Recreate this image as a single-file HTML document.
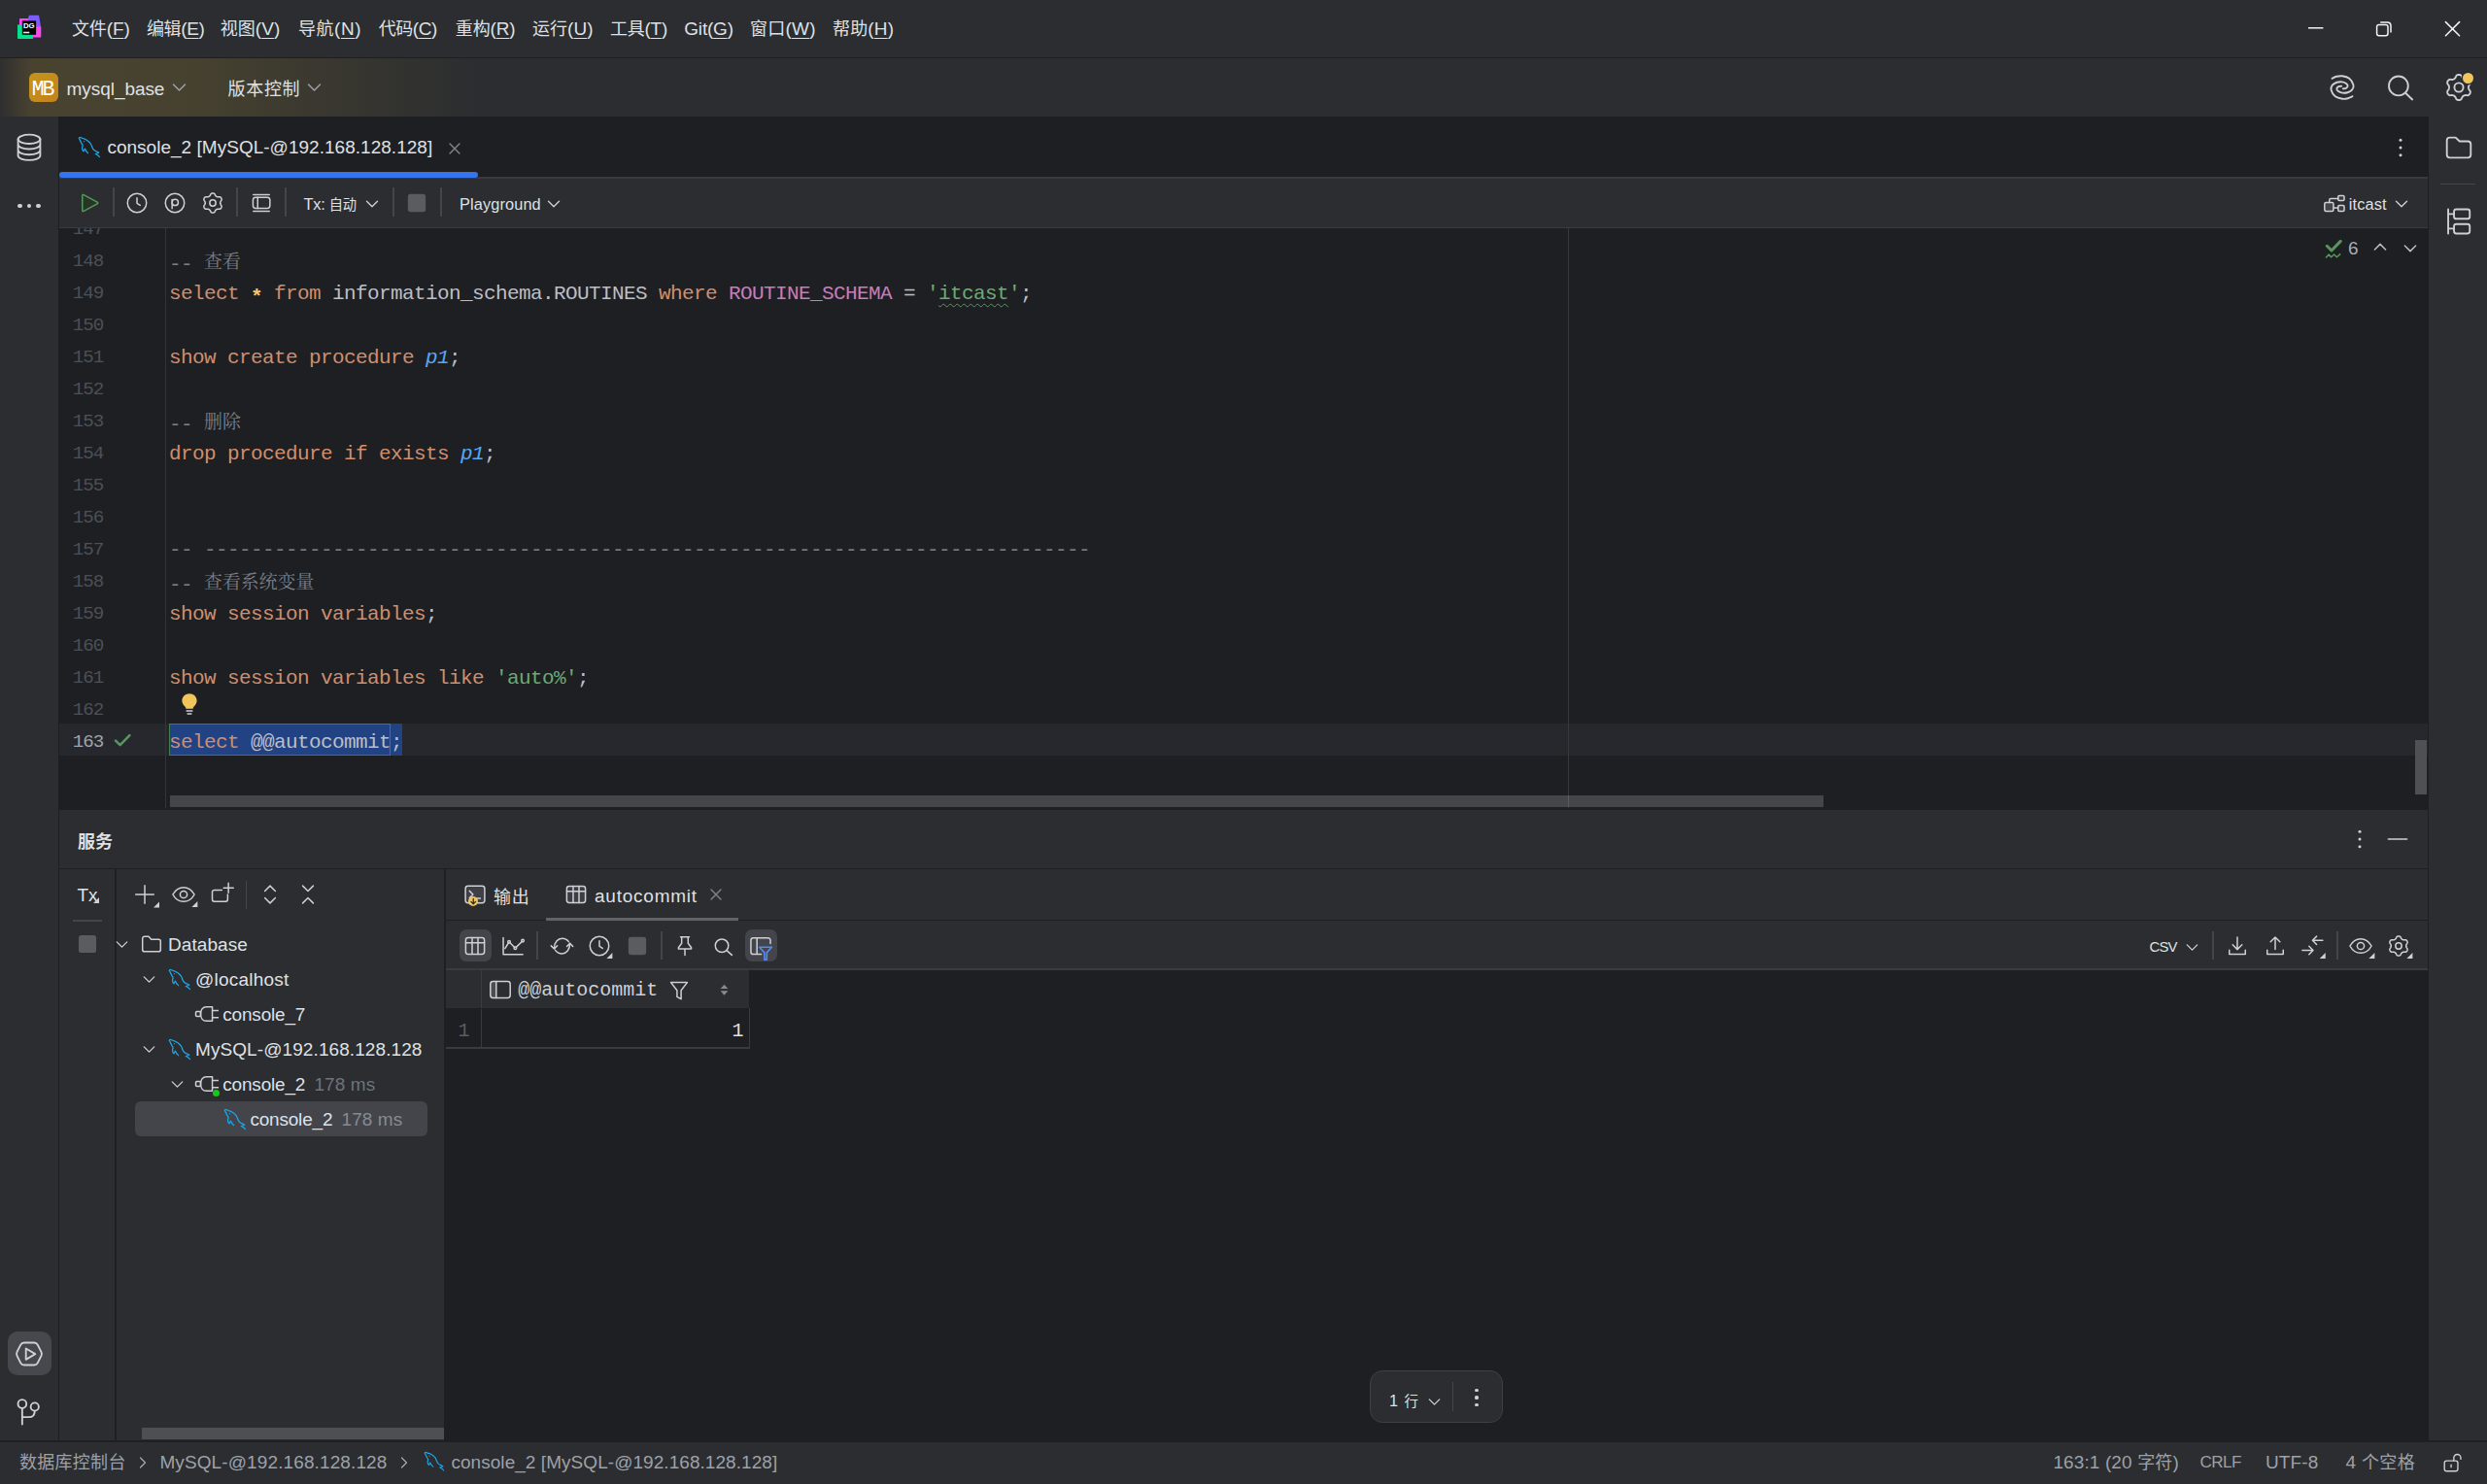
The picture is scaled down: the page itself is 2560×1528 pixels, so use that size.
<!DOCTYPE html>
<html lang="zh-CN"><head><meta charset="utf-8"><title>DataGrip - console_2</title>
<style>
html,body{margin:0;padding:0;background:#1E1F22;}
body{width:2560px;height:1528px;position:relative;overflow:hidden;font-family:"Liberation Sans","Noto Sans CJK SC",sans-serif;}
.b{position:absolute;}
.i{position:absolute;overflow:visible;}
.t{position:absolute;white-space:pre;font-family:"Liberation Sans","Noto Sans CJK SC",sans-serif;}
.t u{text-decoration-thickness:1.3px;text-underline-offset:2.5px;}
.m{font-family:"Liberation Mono","Noto Serif CJK SC",monospace;}
.code{position:absolute;overflow:hidden;font-family:"Liberation Mono","Noto Serif CJK SC",monospace;}
.ln{position:absolute;left:8.6px;width:36.6px;font-size:19.2px;line-height:33px;height:33px;text-align:right;white-space:pre;letter-spacing:-1px;margin-top:3.3px;}
.cl{position:absolute;left:113px;font-size:21px;letter-spacing:-0.603px;line-height:33px;height:33px;white-space:pre;margin-top:3px;}
.cj{font-family:"Noto Serif CJK SC",serif;font-size:18.9px;letter-spacing:0;position:relative;top:-2.2px;}
</style></head>
<body>
<div class="b" style="left:0px;top:0px;width:2560px;height:59px;background:#2B2D30;"></div>
<div class="b" style="left:0px;top:59px;width:2560px;height:1px;background:#1E1F22;"></div>
<div class="b" style="left:0px;top:60px;width:2560px;height:60px;background:#2B2D30;background:linear-gradient(90deg,#2F2F2F 0px,#48422F 32px,#47422F 190px,#3A382F 330px,#2B2D30 490px);"></div>
<svg class="i" style="left:17px;top:15px;" width="26" height="26" viewBox="0 0 26 26"><defs><linearGradient id="lg1" x1="0" y1="0" x2="0" y2="1"><stop offset="0" stop-color="#7A5CFF"/><stop offset="0.8" stop-color="#7F5BFF"/><stop offset="1" stop-color="#FF45ED"/></linearGradient></defs><g stroke-linejoin="round" stroke-width="1.6"><path d="M3.8 4.8H12L14 7H7V12.5L3.8 11.5Z" fill="#FF45ED" stroke="#FF45ED"/><path d="M13.4 1.6H22.4L24.4 13.6H19V7H14L12.6 4.6Z" fill="url(#lg1)" stroke="url(#lg1)"/><path d="M19 13.6H24.5V22.8H16.5L15 20H19Z" fill="#FF45ED" stroke="#FF45ED"/><path d="M1.8 11L6.5 12.5V20H15.4L16.4 24.2H1.8Z" fill="#08DE8C" stroke="#08DE8C"/></g><rect x="5.8" y="6.4" width="14.3" height="14.4" fill="#000"/><text x="6.9" y="13.9" font-family="Liberation Sans,sans-serif" font-weight="700" font-size="7.6" fill="#fff" textLength="11.8" lengthAdjust="spacingAndGlyphs">DG</text><rect x="7.1" y="17.7" width="6.2" height="1.6" fill="#e8e8e8"/></svg>
<span id="t1" class="t" style="left:74.00px;top:16.5px;font-size:18.99px;color:#DFE1E5;line-height:26px;letter-spacing:-0.125px;"><span style="font-size:18px">文件</span>(<u>F</u>)</span>
<span id="t2" class="t" style="left:151.00px;top:16.5px;font-size:18.99px;color:#DFE1E5;line-height:26px;letter-spacing:-0.375px;"><span style="font-size:18px">编辑</span>(<u>E</u>)</span>
<span id="t3" class="t" style="left:226.70px;top:16.5px;font-size:18.99px;color:#DFE1E5;line-height:26px;letter-spacing:0.050px;"><span style="font-size:18px">视图</span>(<u>V</u>)</span>
<span id="t4" class="t" style="left:307.00px;top:16.5px;font-size:18.99px;color:#DFE1E5;line-height:26px;letter-spacing:0.550px;"><span style="font-size:18px">导航</span>(<u>N</u>)</span>
<span id="t5" class="t" style="left:389.80px;top:16.5px;font-size:18.99px;color:#DFE1E5;line-height:26px;letter-spacing:-0.475px;"><span style="font-size:18px">代码</span>(<u>C</u>)</span>
<span id="t6" class="t" style="left:468.80px;top:16.5px;font-size:18.99px;color:#DFE1E5;line-height:26px;letter-spacing:-0.125px;"><span style="font-size:18px">重构</span>(<u>R</u>)</span>
<span id="t7" class="t" style="left:548.00px;top:16.5px;font-size:18.99px;color:#DFE1E5;line-height:26px;letter-spacing:0.025px;"><span style="font-size:18px">运行</span>(<u>U</u>)</span>
<span id="t8" class="t" style="left:628.00px;top:16.5px;font-size:18.99px;color:#DFE1E5;line-height:26px;letter-spacing:-0.250px;"><span style="font-size:18px">工具</span>(<u>T</u>)</span>
<span id="t9" class="t" style="left:704.30px;top:16.5px;font-size:18.99px;color:#DFE1E5;line-height:26px;letter-spacing:-0.200px;">Git(<u>G</u>)</span>
<span id="t10" class="t" style="left:772.00px;top:16.5px;font-size:18.99px;color:#DFE1E5;line-height:26px;letter-spacing:0.225px;"><span style="font-size:18px">窗口</span>(<u>W</u>)</span>
<span id="t11" class="t" style="left:857.00px;top:16.5px;font-size:18.99px;color:#DFE1E5;line-height:26px;letter-spacing:0.150px;"><span style="font-size:18px">帮助</span>(<u>H</u>)</span>
<svg class="i" style="left:2376px;top:21px;" width="16" height="16" viewBox="0 0 16 16"><path stroke="#F2F3F5" stroke-width="1.5" d="M0 7.8H15.4"/></svg>
<svg class="i" style="left:2445px;top:21px;" width="18" height="18" viewBox="0 0 18 18"><g fill="none" stroke="#F2F3F5" stroke-width="1.5"><rect x="1.6" y="4.4" width="11.4" height="11.4" rx="2.2"/><path d="M5.2 1.9H12.2C14.4 1.9 16 3.4 16 5.6V12.4"/></g></svg>
<svg class="i" style="left:2516px;top:21px;" width="18" height="18" viewBox="0 0 18 18"><path stroke="#F2F3F5" stroke-width="1.5" stroke-linecap="round" d="M1.4 1.6L15.6 15.8M15.6 1.6L1.4 15.8"/></svg>
<div class="b" style="left:30px;top:75px;width:30px;height:30px;background:#C28A1C;border-radius:6px;background:linear-gradient(135deg,#C4951D,#C4821B);"></div>
<span id="t12" class="t m" style="left:32.80px;top:79.0px;font-size:21.50px;color:#fff;line-height:26px;font-family:'Liberation Mono',monospace;letter-spacing:-2.2px;">MB</span>
<span id="t13" class="t" style="left:68.60px;top:78.5px;font-size:18.99px;color:#DFE1E5;line-height:26px;letter-spacing:-0.056px;">mysql_base</span>
<svg class="i" style="left:177px;top:85px;" width="15" height="10" viewBox="0 0 15 10"><path fill="none" stroke="#9DA0A8" stroke-width="1.5" stroke-linecap="round" stroke-linejoin="round" d="M1.5 2L7.5 8L13.5 2"/></svg>
<span id="t14" class="t" style="left:234.60px;top:78.7px;font-size:18.99px;color:#DFE1E5;line-height:26px;letter-spacing:0.667px;"><span style="font-size:18px">版本控制</span></span>
<svg class="i" style="left:316px;top:85px;" width="15" height="10" viewBox="0 0 15 10"><path fill="none" stroke="#9DA0A8" stroke-width="1.5" stroke-linecap="round" stroke-linejoin="round" d="M1.5 2L7.5 8L13.5 2"/></svg>
<svg class="i" style="left:2396px;top:75px;" width="30" height="30" viewBox="0 0 20 20"><path fill="none" stroke="#CED0D6" stroke-width="1.25" stroke-linecap="round" stroke-linejoin="round" d="M3.00 3.85C3.52 3.62 4.93 2.77 6.10 2.50C7.27 2.23 8.55 1.98 10.00 2.20C11.45 2.43 13.53 2.83 14.80 3.85C16.07 4.87 17.32 7.02 17.65 8.30C17.98 9.58 17.47 10.68 16.80 11.55C16.13 12.42 14.78 13.13 13.65 13.50C12.52 13.87 11.09 13.91 10.00 13.75C8.91 13.59 7.72 13.03 7.10 12.55C6.47 12.07 6.19 11.38 6.25 10.85C6.31 10.32 6.91 9.69 7.45 9.40C7.99 9.11 9.16 9.15 9.50 9.10M17.00 16.15C16.48 16.38 15.07 17.23 13.90 17.50C12.73 17.77 11.45 18.03 10.00 17.80C8.55 17.57 6.48 17.17 5.20 16.15C3.92 15.13 2.68 12.98 2.35 11.70C2.02 10.42 2.53 9.32 3.20 8.45C3.87 7.58 5.22 6.87 6.35 6.50C7.48 6.13 8.91 6.09 10.00 6.25C11.09 6.41 12.28 6.97 12.90 7.45C13.53 7.93 13.81 8.62 13.75 9.15C13.69 9.68 13.09 10.31 12.55 10.60C12.01 10.89 10.84 10.85 10.50 10.90"/></svg>
<svg class="i" style="left:2456px;top:75px;" width="30" height="30" viewBox="0 0 20 20"><g fill="none" stroke="#CED0D6" stroke-width="1.25" stroke-linecap="round" stroke-linejoin="round"><circle cx="8.6" cy="8.95" r="6.6"/><path d="M13.4 13.8L18.1 18.3"/></g></svg>
<svg class="i" style="left:2515.5px;top:75px;" width="30" height="30" viewBox="0 0 20 20"><g fill="none" stroke="#CED0D6" stroke-width="1.25" stroke-linecap="round" stroke-linejoin="round"><path d="M10.00 1.25L10.57 1.32L11.12 1.52L11.62 1.87L11.99 2.56L12.29 3.27L12.62 3.67L12.96 3.99L13.32 4.24L13.72 4.43L14.17 4.57L14.69 4.65L15.44 4.56L16.23 4.53L16.79 4.79L17.23 5.17L17.58 5.62L17.80 6.15L17.90 6.73L17.85 7.34L17.44 8.01L16.97 8.61L16.79 9.11L16.68 9.56L16.65 10.00L16.68 10.44L16.79 10.89L16.97 11.39L17.44 11.99L17.85 12.66L17.90 13.27L17.80 13.85L17.58 14.37L17.23 14.83L16.79 15.21L16.23 15.47L15.44 15.44L14.69 15.35L14.17 15.43L13.72 15.57L13.32 15.76L12.96 16.01L12.62 16.33L12.29 16.73L11.99 17.44L11.62 18.13L11.12 18.48L10.57 18.68L10.00 18.75L9.43 18.68L8.88 18.48L8.38 18.13L8.01 17.44L7.71 16.73L7.38 16.33L7.04 16.01L6.68 15.76L6.28 15.57L5.83 15.43L5.31 15.35L4.56 15.44L3.77 15.47L3.21 15.21L2.77 14.83L2.42 14.38L2.20 13.85L2.10 13.27L2.15 12.66L2.56 11.99L3.03 11.39L3.21 10.89L3.32 10.44L3.35 10.00L3.32 9.56L3.21 9.11L3.03 8.61L2.56 8.01L2.15 7.34L2.10 6.73L2.20 6.15L2.42 5.62L2.77 5.17L3.21 4.79L3.77 4.53L4.56 4.56L5.31 4.65L5.83 4.57L6.28 4.43L6.67 4.24L7.04 3.99L7.38 3.67L7.71 3.27L8.01 2.56L8.38 1.87L8.88 1.52L9.43 1.32Z"/><circle cx="10" cy="10" r="3.05"/></g></svg>
<div class="b" style="left:2534.5px;top:74.5px;width:11px;height:11px;background:#F2C55C;border-radius:50%;box-shadow:0 0 0 1.5px #2B2D30;"></div>
<div class="b" style="left:0px;top:120px;width:60px;height:1365px;background:#2B2D30;"></div>
<div class="b" style="left:60px;top:120px;width:1px;height:1365px;background:#1E1F22;"></div>
<svg class="i" style="left:15px;top:137px;" width="30" height="30" viewBox="0 0 20 20"><g fill="none" stroke="#CED0D6" stroke-width="1.25" stroke-linecap="round" stroke-linejoin="round"><ellipse cx="10" cy="4.2" rx="7.6" ry="3.1"/><path d="M2.4 4.2V15.5C2.4 17.2 5.8 18.6 10 18.6C14.2 18.6 17.6 17.2 17.6 15.5V4.2M2.4 7.9C2.4 9.6 5.8 11 10 11C14.2 11 17.6 9.6 17.6 7.9M2.4 11.7C2.4 13.4 5.8 14.8 10 14.8C14.2 14.8 17.6 13.4 17.6 11.7"/></g></svg>
<div class="b" style="left:18.3px;top:209.7px;width:4.6px;height:4.6px;background:#CED0D6;border-radius:50%;"></div>
<div class="b" style="left:27.7px;top:209.7px;width:4.6px;height:4.6px;background:#CED0D6;border-radius:50%;"></div>
<div class="b" style="left:37.1px;top:209.7px;width:4.6px;height:4.6px;background:#CED0D6;border-radius:50%;"></div>
<div class="b" style="left:7.5px;top:1371px;width:45px;height:45px;background:#46484D;border-radius:10px;"></div>
<svg class="i" style="left:15px;top:1378.5px;" width="30" height="30" viewBox="0 0 20 20"><g fill="none" stroke="#CED0D6" stroke-width="1.25" stroke-linecap="round" stroke-linejoin="round"><path d="M1.72 11.43Q1.00 10.00 1.72 8.57L4.18 3.73Q4.90 2.30 6.50 2.30L13.50 2.30Q15.10 2.30 15.82 3.73L18.28 8.57Q19.00 10.00 18.28 11.43L15.82 16.27Q15.10 17.70 13.50 17.70L6.50 17.70Q4.90 17.70 4.18 16.27Z"/><path d="M7.8 6.3V13.9L14.2 10.1Z"/></g></svg>
<svg class="i" style="left:14px;top:1437.8px;" width="30" height="30" viewBox="0 0 20 20"><g fill="none" stroke="#CED0D6" stroke-width="1.25" stroke-linecap="round" stroke-linejoin="round"><circle cx="5.9" cy="5" r="2.9"/><circle cx="14.5" cy="7" r="2.75"/><path d="M5.9 7.9V19M14.5 9.8C14.5 12.6 13 14.1 10.5 14.1H5.9"/></g></svg>
<div class="b" style="left:2500px;top:120px;width:60px;height:1365px;background:#2B2D30;"></div>
<div class="b" style="left:2499px;top:120px;width:1px;height:1365px;background:#1E1F22;"></div>
<svg class="i" style="left:2515.9px;top:137px;" width="30" height="30" viewBox="0 0 20 20"><path fill="none" stroke="#CED0D6" stroke-width="1.25" stroke-linecap="round" stroke-linejoin="round" d="M1.8 5.1C1.8 4 2.7 3.1 3.8 3.1H7.8L10.5 5.7H16.2C17.3 5.7 18.2 6.6 18.2 7.7V14.9C18.2 16 17.3 16.9 16.2 16.9H3.8C2.7 16.9 1.8 16 1.8 14.9Z"/></svg>
<div class="b" style="left:2512px;top:189px;width:36px;height:1px;background:#43454A;"></div>
<svg class="i" style="left:2516px;top:212.75px;" width="30" height="30" viewBox="0 0 20 20"><g fill="none" stroke="#CED0D6" stroke-width="1.25" stroke-linecap="round" stroke-linejoin="round"><path d="M2.7 1.7V18.3M2.7 4.9H6.7M2.7 14.9H6.7"/><rect x="6.7" y="1.7" width="10.8" height="6.5" rx="1.6"/><rect x="6.7" y="11.8" width="10.8" height="6.5" rx="1.6"/></g></svg>
<div class="b" style="left:61px;top:120px;width:2438px;height:62px;background:#1E1F22;"></div>
<div class="b" style="left:61px;top:182px;width:2438px;height:2px;background:#393B40;"></div>
<div class="b" style="left:61px;top:177px;width:431px;height:5.5px;background:#3574F0;border-radius:3px;"></div>
<svg class="i" style="left:80.0px;top:140.0px;" width="24" height="24" viewBox="0 0 16 16"><path fill="none" stroke="#1FA5E8" stroke-width="0.85" stroke-linecap="round" stroke-linejoin="round" d="M0.85 1.45C1.01 1.37 1.44 0.94 1.80 0.95C2.17 0.96 2.50 1.31 3.04 1.52C3.58 1.73 4.39 1.91 5.06 2.23C5.73 2.55 6.47 2.97 7.08 3.44C7.69 3.91 8.26 4.45 8.70 5.06C9.14 5.67 9.41 6.44 9.71 7.08C10.01 7.72 10.14 8.39 10.51 8.90C10.88 9.41 11.42 9.77 11.93 10.11C12.44 10.45 13.12 10.69 13.55 10.92C13.98 11.15 14.34 11.40 14.50 11.50L12.2 12.35L13.75 13.2L15 14.4M0.85 1.45C1.01 1.78 1.52 2.84 1.82 3.44C2.12 4.04 2.36 4.55 2.63 5.06C2.90 5.56 3.37 6.00 3.44 6.47C3.51 6.94 3.07 7.38 3.04 7.89C3.01 8.39 3.07 9.06 3.24 9.50C3.41 9.94 3.92 10.33 4.05 10.50L4.96 8.7L5.87 10.5L7.08 11.73"/><circle cx="4.35" cy="3.75" r="0.42" fill="#1FA5E8"/></svg>
<span id="t15" class="t" style="left:110.40px;top:138.5px;font-size:18.99px;color:#DFE1E5;line-height:26px;letter-spacing:0.030px;">console_2 [MySQL-@192.168.128.128]</span>
<svg class="i" style="left:456.0px;top:140.5px;" width="24" height="24" viewBox="0 0 16 16"><path fill="none" stroke="#7D8188" stroke-width="1" stroke-linecap="round" d="M4.7 4.7L11.3 11.3M11.3 4.7L4.7 11.3"/></svg>
<svg class="i" style="left:2459.0px;top:140.0px;" width="24" height="24" viewBox="0 0 16 16"><g fill="#CED0D6"><circle cx="8" cy="2.9" r="1"/><circle cx="8" cy="8" r="1"/><circle cx="8" cy="13.1" r="1"/></g></svg>
<div class="b" style="left:61px;top:184px;width:2438px;height:50px;background:#2B2D30;"></div>
<div class="b" style="left:61px;top:234px;width:2438px;height:1px;background:#393B40;"></div>
<svg class="i" style="left:81.0px;top:197.0px;" width="24" height="24" viewBox="0 0 16 16"><path fill="#253627" stroke="#57965C" stroke-width="1" stroke-linejoin="round" d="M2.50 3.00Q2.50 1.90 3.47 2.43L12.73 7.47Q13.70 8.00 12.73 8.53L3.47 13.57Q2.50 14.10 2.50 13.00Z"/></svg>
<div class="b" style="left:116.25px;top:192.5px;width:1.5px;height:30px;background:#43454A;"></div>
<div class="b" style="left:243.25px;top:192.5px;width:1.5px;height:30px;background:#43454A;"></div>
<div class="b" style="left:293.25px;top:192.5px;width:1.5px;height:30px;background:#43454A;"></div>
<div class="b" style="left:404.25px;top:192.5px;width:1.5px;height:30px;background:#43454A;"></div>
<div class="b" style="left:453.25px;top:192.5px;width:1.5px;height:30px;background:#43454A;"></div>
<svg class="i" style="left:129.0px;top:197.0px;" width="24" height="24" viewBox="0 0 16 16"><g fill="none" stroke="#CED0D6" stroke-width="1" stroke-linecap="round" stroke-linejoin="round"><circle cx="8" cy="8" r="6.5"/><path d="M8 4.5V8.2L10.2 9.6"/></g></svg>
<svg class="i" style="left:168.0px;top:197.0px;" width="24" height="24" viewBox="0 0 16 16"><g fill="none" stroke="#CED0D6" stroke-width="1" stroke-linecap="round" stroke-linejoin="round"><circle cx="8" cy="8" r="6.5"/><circle cx="8.2" cy="7.6" r="2.1"/><path d="M6.1 5.6V11.8"/></g></svg>
<svg class="i" style="left:207.0px;top:197.0px;" width="24" height="24" viewBox="0 0 16 16"><g fill="none" stroke="#CED0D6" stroke-width="1" stroke-linecap="round" stroke-linejoin="round"><path d="M8.00 1.25L8.44 1.30L8.86 1.46L9.25 1.72L9.54 2.25L9.77 2.79L10.03 3.10L10.29 3.35L10.57 3.54L10.88 3.69L11.23 3.80L11.63 3.86L12.21 3.79L12.81 3.78L13.24 3.98L13.58 4.27L13.85 4.62L14.02 5.03L14.10 5.47L14.06 5.94L13.75 6.46L13.39 6.93L13.25 7.31L13.18 7.66L13.15 8.00L13.18 8.34L13.25 8.69L13.39 9.07L13.75 9.54L14.06 10.06L14.10 10.53L14.02 10.97L13.85 11.37L13.58 11.73L13.24 12.02L12.81 12.22L12.21 12.21L11.63 12.14L11.23 12.20L10.88 12.31L10.57 12.46L10.29 12.65L10.03 12.90L9.77 13.21L9.54 13.75L9.25 14.28L8.86 14.54L8.44 14.70L8.00 14.75L7.56 14.70L7.14 14.54L6.75 14.28L6.46 13.75L6.23 13.21L5.97 12.90L5.71 12.65L5.43 12.46L5.12 12.31L4.77 12.20L4.37 12.14L3.79 12.21L3.19 12.22L2.76 12.02L2.42 11.73L2.15 11.38L1.98 10.97L1.90 10.53L1.94 10.06L2.25 9.54L2.61 9.07L2.75 8.69L2.82 8.34L2.85 8.00L2.82 7.66L2.75 7.31L2.61 6.93L2.25 6.46L1.94 5.94L1.90 5.47L1.98 5.03L2.15 4.62L2.42 4.27L2.76 3.98L3.19 3.78L3.79 3.79L4.37 3.86L4.77 3.80L5.12 3.69L5.42 3.54L5.71 3.35L5.97 3.10L6.23 2.79L6.46 2.25L6.75 1.72L7.14 1.46L7.56 1.30Z"/><circle cx="8" cy="8" r="2.1"/></g></svg>
<svg class="i" style="left:257.0px;top:197.2px;" width="24" height="24" viewBox="0 0 16 16"><g fill="none" stroke="#CED0D6" stroke-width="1" stroke-linecap="round" stroke-linejoin="round"><path d="M2.5 2.3H13.5M2.5 13.7H13.5M5.5 4.1V11.6"/><rect x="2.3" y="4.1" width="11.6" height="7.5" rx="1.8"/></g></svg>
<span id="t16" class="t" style="left:312.60px;top:196.5px;font-size:16.45px;color:#DFE1E5;line-height:26px;letter-spacing:-0.300px;">Tx: <span style="font-size:14.3px">自动</span></span>
<svg class="i" style="left:372.0px;top:199.0px;" width="22" height="22" viewBox="0 0 16 16"><path fill="none" stroke="#CED0D6" stroke-width="1" stroke-linecap="round" stroke-linejoin="round" d="M4 6L8 10L12 6"/></svg>
<svg class="i" style="left:417.0px;top:197.0px;" width="24" height="24" viewBox="0 0 16 16"><rect x="1.9" y="1.9" width="12.2" height="12.2" rx="1.8" fill="#5B5C60"/></svg>
<span id="t17" class="t" style="left:473.00px;top:196.5px;font-size:16.35px;color:#DFE1E5;line-height:26px;letter-spacing:0.111px;">Playground</span>
<svg class="i" style="left:559.4px;top:199.0px;" width="22" height="22" viewBox="0 0 16 16"><path fill="none" stroke="#CED0D6" stroke-width="1" stroke-linecap="round" stroke-linejoin="round" d="M4 6L8 10L12 6"/></svg>
<svg class="i" style="left:2391.0px;top:197.0px;" width="24" height="24" viewBox="0 0 16 16"><g fill="none" stroke="#CED0D6" stroke-width="1" stroke-linecap="round" stroke-linejoin="round"><rect x="1.2" y="7.6" width="6.1" height="6" rx="1" fill="#43454A"/><rect x="10.5" y="2.95" width="4.2" height="3.4" rx="0.8" fill="#3A3C40"/><rect x="10.5" y="9.7" width="4.2" height="3.9" rx="0.8" fill="#3A3C40"/><path d="M4.5 7.6V6C4.5 5.4 4.9 5 5.5 5H10.5M7.3 11.3H10.5"/></g></svg>
<span id="t18" class="t" style="left:2417.80px;top:196.5px;font-size:16.35px;color:#DFE1E5;line-height:26px;letter-spacing:0.120px;">itcast</span>
<svg class="i" style="left:2461.0px;top:199.0px;" width="22" height="22" viewBox="0 0 16 16"><path fill="none" stroke="#CED0D6" stroke-width="1" stroke-linecap="round" stroke-linejoin="round" d="M4 6L8 10L12 6"/></svg>
<div class="b" style="left:61px;top:235px;width:2438px;height:597px;background:#1E1F22;"></div>
<div class="b" style="left:61px;top:745px;width:2438px;height:33px;background:#26282E;"></div>
<div class="b" style="left:170px;top:235px;width:1px;height:597px;background:#313438;"></div>
<div class="b" style="left:1613.6px;top:235px;width:1.8px;height:597px;background:#36383C;"></div>
<div class="b" style="left:174.2px;top:745px;width:239.8px;height:33px;background:#214283;"></div>
<div class="b" style="left:174px;top:745px;width:228.2px;height:33px;background:transparent;border:1.5px solid #3F7E4E;box-sizing:border-box;"></div>
<div class="code" style="left:61px;top:235px;width:2438px;height:597px;">
<span class="ln" style="top:-18px;color:#4B5059">147</span>
<span class="ln" style="top:15px;color:#4B5059">148</span>
<span class="cl" style="top:15px"><span style="color:#7A7E85;">-- <span class="cj">查看</span></span></span>
<span class="ln" style="top:48px;color:#4B5059">149</span>
<span class="cl" style="top:48px"><span style="color:#CF8E6D;">select </span><span style="color:#FFC66D;position:relative;top:3.5px;font-weight:700;">*</span><span style="color:#CF8E6D;"> from </span><span style="color:#BCBEC4;">information_schema.ROUTINES </span><span style="color:#CF8E6D;">where </span><span style="color:#C77DBB;">ROUTINE_SCHEMA</span><span style="color:#BCBEC4;"> = </span><span style="color:#6AAB73;">'</span><span style="color:#6AAB73;text-decoration:underline wavy #57965C 1px;text-underline-offset:4px;">itcast</span><span style="color:#6AAB73;">'</span><span style="color:#BCBEC4;">;</span></span>
<span class="ln" style="top:81px;color:#4B5059">150</span>
<span class="ln" style="top:114px;color:#4B5059">151</span>
<span class="cl" style="top:114px"><span style="color:#CF8E6D;">show create procedure </span><span style="color:#56A8F5;font-style:italic;">p1</span><span style="color:#BCBEC4;">;</span></span>
<span class="ln" style="top:147px;color:#4B5059">152</span>
<span class="ln" style="top:180px;color:#4B5059">153</span>
<span class="cl" style="top:180px"><span style="color:#7A7E85;">-- <span class="cj">删除</span></span></span>
<span class="ln" style="top:213px;color:#4B5059">154</span>
<span class="cl" style="top:213px"><span style="color:#CF8E6D;">drop procedure if exists </span><span style="color:#56A8F5;font-style:italic;">p1</span><span style="color:#BCBEC4;">;</span></span>
<span class="ln" style="top:246px;color:#4B5059">155</span>
<span class="ln" style="top:279px;color:#4B5059">156</span>
<span class="ln" style="top:312px;color:#4B5059">157</span>
<span class="cl" style="top:312px"><span style="color:#7A7E85;">-- ----------------------------------------------------------------------------</span></span>
<span class="ln" style="top:345px;color:#4B5059">158</span>
<span class="cl" style="top:345px"><span style="color:#7A7E85;">-- <span class="cj">查看系统变量</span></span></span>
<span class="ln" style="top:378px;color:#4B5059">159</span>
<span class="cl" style="top:378px"><span style="color:#CF8E6D;">show session variables</span><span style="color:#BCBEC4;">;</span></span>
<span class="ln" style="top:411px;color:#4B5059">160</span>
<span class="ln" style="top:444px;color:#4B5059">161</span>
<span class="cl" style="top:444px"><span style="color:#CF8E6D;">show session variables like </span><span style="color:#6AAB73;">'auto%'</span><span style="color:#BCBEC4;">;</span></span>
<span class="ln" style="top:477px;color:#4B5059">162</span>
<span class="ln" style="top:510px;color:#A1A3AB">163</span>
<span class="cl" style="top:510px"><span style="color:#CF8E6D;">select </span><span style="color:#BCBEC4;">@@autocommit;</span></span>
</div>
<svg class="i" style="left:116.5px;top:755px;" width="18.5" height="14.5" viewBox="0 0 18.5 14.5"><path fill="none" stroke="#57965C" stroke-width="2.5" stroke-linecap="round" stroke-linejoin="round" d="M2 7.6L6.6 12.2L16.4 2.2"/></svg>
<svg class="i" style="left:185px;top:713px;" width="20" height="24" viewBox="0 0 20 24"><path fill="#F2C55C" d="M10 1.2C5.6 1.2 2.4 4.4 2.4 8.4C2.4 11 3.8 12.8 5.2 14.2C6 15 6.4 15.8 6.4 16.8H13.6C13.6 15.8 14 15 14.8 14.2C16.2 12.8 17.6 11 17.6 8.4C17.6 4.4 14.4 1.2 10 1.2Z"/><path stroke="#CED0D6" stroke-width="1.6" d="M6.6 19H13.4M7.6 22H12.4"/></svg>
<svg class="i" style="left:2392px;top:245px;" width="21" height="22" viewBox="0 0 21 22"><path fill="none" stroke="#57965C" stroke-width="3" stroke-linecap="round" stroke-linejoin="round" d="M3.3 8.3L8 13L17.2 3.4"/><path fill="none" stroke="#57965C" stroke-width="1.5" stroke-linejoin="round" d="M2 20.4L5.2 17L7.6 19.8L10.6 17L13.4 19.8L17.2 16.4"/></svg>
<span id="t19" class="t" style="left:2417.00px;top:243.0px;font-size:18.99px;color:#A8ADB5;line-height:26px;">6</span>
<svg class="i" style="left:2443px;top:249px;" width="14" height="10" viewBox="0 0 14 10"><path fill="none" stroke="#B9BCC3" stroke-width="1.5" stroke-linecap="round" stroke-linejoin="round" d="M1.4 8L7 2.4L12.6 8"/></svg>
<svg class="i" style="left:2474px;top:251px;" width="14" height="10" viewBox="0 0 14 10"><path fill="none" stroke="#B9BCC3" stroke-width="1.5" stroke-linecap="round" stroke-linejoin="round" d="M1.4 2L7 7.6L12.6 2"/></svg>
<div class="b" style="left:2486px;top:762px;width:12px;height:56px;background:#4E5054;"></div>
<div class="b" style="left:175px;top:819px;width:1702px;height:12px;background:#454648;"></div>
<div class="b" style="left:1613.6px;top:819px;width:1.8px;height:12px;background:#5A5B5E;"></div>
<div class="b" style="left:61px;top:834px;width:2438px;height:651px;background:#2B2D30;"></div>
<span id="t20" class="t" style="left:80.00px;top:854.2px;font-size:18.99px;color:#DFE1E5;line-height:26px;font-weight:700;"><span style="font-size:18px">服务</span></span>
<svg class="i" style="left:2416.8px;top:852.0px;" width="24" height="24" viewBox="0 0 16 16"><g fill="#CED0D6"><circle cx="8" cy="2.9" r="1"/><circle cx="8" cy="8" r="1"/><circle cx="8" cy="13.1" r="1"/></g></svg>
<svg class="i" style="left:2456.2px;top:852.0px;" width="24" height="24" viewBox="0 0 16 16"><path fill="none" stroke="#CED0D6" stroke-width="1" stroke-linecap="round" stroke-linejoin="round" d="M1.6 8H14.4"/></svg>
<div class="b" style="left:61px;top:894px;width:2438px;height:1px;background:#1E1F22;"></div>
<div class="b" style="left:118px;top:895px;width:2px;height:590px;background:#1E1F22;"></div>
<div class="b" style="left:457px;top:895px;width:2px;height:590px;background:#1E1F22;"></div>
<span id="t21" class="t" style="left:79.50px;top:908.5px;font-size:18.99px;color:#DFE1E5;line-height:26px;">Tx</span>
<svg class="i" style="left:96px;top:924px;" width="6" height="6" viewBox="0 0 6 6"><path fill="#CED0D6" d="M6 0V6H0Z"/></svg>
<div class="b" style="left:75px;top:947px;width:30px;height:1.5px;background:#43454A;"></div>
<div class="b" style="left:81px;top:963px;width:18px;height:18px;background:#5B5C60;border-radius:2.5px;"></div>
<svg class="i" style="left:137.0px;top:909.0px;" width="24" height="24" viewBox="0 0 16 16"><path fill="none" stroke="#CED0D6" stroke-width="1" stroke-linecap="round" stroke-linejoin="round" d="M8 1.8V14.2M1.8 8H14.2"/><path fill="#CED0D6" d="M18 13V17H14Z"/></svg>
<svg class="i" style="left:177.0px;top:909.0px;" width="24" height="24" viewBox="0 0 16 16"><g fill="none" stroke="#CED0D6" stroke-width="1" stroke-linecap="round" stroke-linejoin="round"><path d="M0.6 8C2.3 4.9 5 3.1 8 3.1C11 3.1 13.7 4.9 15.4 8C13.7 11.1 11 12.9 8 12.9C5 12.9 2.3 11.1 0.6 8Z"/><circle cx="8" cy="8" r="2.4"/></g></svg>
<svg class="i" style="left:177.0px;top:909.0px;" width="24" height="24" viewBox="0 0 16 16"><path fill="#CED0D6" d="M17.6 12.7V16.7H13.6Z"/></svg>
<svg class="i" style="left:216.7px;top:906.7px;" width="24" height="24" viewBox="0 0 16 16"><path fill="none" stroke="#CED0D6" stroke-width="1" stroke-linecap="round" stroke-linejoin="round" d="M7.6 6.3H2.4C1.6 6.3 1 6.9 1 7.7V12.7C1 13.5 1.6 14.1 2.4 14.1H10.2C11 14.1 11.6 13.5 11.6 12.7V9.4M12.1 1.5V8.2M8.8 4.85H15.5"/></svg>
<div class="b" style="left:252.5px;top:906.5px;width:1.5px;height:29px;background:#43454A;"></div>
<svg class="i" style="left:266.0px;top:909.0px;" width="24" height="24" viewBox="0 0 16 16"><path fill="none" stroke="#CED0D6" stroke-width="1" stroke-linecap="round" stroke-linejoin="round" d="M4.4 5.7L8 2.1L11.6 5.7M4.4 10.3L8 13.9L11.6 10.3"/></svg>
<svg class="i" style="left:305.0px;top:909.0px;" width="24" height="24" viewBox="0 0 16 16"><path fill="none" stroke="#CED0D6" stroke-width="1" stroke-linecap="round" stroke-linejoin="round" d="M4.4 2.1L8 5.7L11.6 2.1M4.4 13.9L8 10.3L11.6 13.9"/></svg>
<div class="b" style="left:138.5px;top:1134px;width:301.5px;height:36px;background:#43454A;border-radius:6px;"></div>
<svg class="i" style="left:115.0px;top:962.0px;" width="21" height="21" viewBox="0 0 16 16"><path fill="none" stroke="#CED0D6" stroke-width="1" stroke-linecap="round" stroke-linejoin="round" d="M4 6L8 10L12 6"/></svg>
<svg class="i" style="left:144.0px;top:960.0px;" width="24" height="24" viewBox="0 0 16 16"><path fill="none" stroke="#CED0D6" stroke-width="1" stroke-linecap="round" stroke-linejoin="round" fill="#3E4045" d="M1.8 4.2C1.8 3.4 2.4 2.8 3.2 2.8H6L7.8 4.8H12.8C13.6 4.8 14.2 5.4 14.2 6.2V11.8C14.2 12.6 13.6 13.2 12.8 13.2H3.2C2.4 13.2 1.8 12.6 1.8 11.8Z"/></svg>
<span id="t22" class="t" style="left:173.00px;top:960.0px;font-size:18.99px;color:#DFE1E5;line-height:26px;letter-spacing:0.071px;">Database</span>
<svg class="i" style="left:142.5px;top:998.0px;" width="21" height="21" viewBox="0 0 16 16"><path fill="none" stroke="#CED0D6" stroke-width="1" stroke-linecap="round" stroke-linejoin="round" d="M4 6L8 10L12 6"/></svg>
<svg class="i" style="left:173.0px;top:997.0px;" width="24" height="24" viewBox="0 0 16 16"><path fill="none" stroke="#1FA5E8" stroke-width="0.85" stroke-linecap="round" stroke-linejoin="round" d="M0.85 1.45C1.01 1.37 1.44 0.94 1.80 0.95C2.17 0.96 2.50 1.31 3.04 1.52C3.58 1.73 4.39 1.91 5.06 2.23C5.73 2.55 6.47 2.97 7.08 3.44C7.69 3.91 8.26 4.45 8.70 5.06C9.14 5.67 9.41 6.44 9.71 7.08C10.01 7.72 10.14 8.39 10.51 8.90C10.88 9.41 11.42 9.77 11.93 10.11C12.44 10.45 13.12 10.69 13.55 10.92C13.98 11.15 14.34 11.40 14.50 11.50L12.2 12.35L13.75 13.2L15 14.4M0.85 1.45C1.01 1.78 1.52 2.84 1.82 3.44C2.12 4.04 2.36 4.55 2.63 5.06C2.90 5.56 3.37 6.00 3.44 6.47C3.51 6.94 3.07 7.38 3.04 7.89C3.01 8.39 3.07 9.06 3.24 9.50C3.41 9.94 3.92 10.33 4.05 10.50L4.96 8.7L5.87 10.5L7.08 11.73"/><circle cx="4.35" cy="3.75" r="0.42" fill="#1FA5E8"/></svg>
<span id="t23" class="t" style="left:201.00px;top:996.3px;font-size:18.99px;color:#DFE1E5;line-height:26px;letter-spacing:0.222px;">@localhost</span>
<svg class="i" style="left:201.0px;top:1032.0px;" width="24" height="24" viewBox="0 0 16 16"><g fill="none" stroke="#CED0D6" stroke-width="1" stroke-linecap="round" stroke-linejoin="round" stroke-width="0.85"><rect x="0.35" y="6.4" width="3.3" height="3.3" rx="0.8"/><path d="M11.7 3.1H7.6C5.2 3.1 3.7 5.2 3.7 8C3.7 10.8 5.2 12.9 7.6 12.9H11.7Z"/><path stroke-linecap="butt" d="M11.7 5.6H16M11.7 10.5H16"/></g></svg>
<span id="t24" class="t" style="left:229.30px;top:1032.2px;font-size:18.99px;color:#DFE1E5;line-height:26px;letter-spacing:-0.188px;">console_7</span>
<svg class="i" style="left:142.5px;top:1070.0px;" width="21" height="21" viewBox="0 0 16 16"><path fill="none" stroke="#CED0D6" stroke-width="1" stroke-linecap="round" stroke-linejoin="round" d="M4 6L8 10L12 6"/></svg>
<svg class="i" style="left:173.0px;top:1069.0px;" width="24" height="24" viewBox="0 0 16 16"><path fill="none" stroke="#1FA5E8" stroke-width="0.85" stroke-linecap="round" stroke-linejoin="round" d="M0.85 1.45C1.01 1.37 1.44 0.94 1.80 0.95C2.17 0.96 2.50 1.31 3.04 1.52C3.58 1.73 4.39 1.91 5.06 2.23C5.73 2.55 6.47 2.97 7.08 3.44C7.69 3.91 8.26 4.45 8.70 5.06C9.14 5.67 9.41 6.44 9.71 7.08C10.01 7.72 10.14 8.39 10.51 8.90C10.88 9.41 11.42 9.77 11.93 10.11C12.44 10.45 13.12 10.69 13.55 10.92C13.98 11.15 14.34 11.40 14.50 11.50L12.2 12.35L13.75 13.2L15 14.4M0.85 1.45C1.01 1.78 1.52 2.84 1.82 3.44C2.12 4.04 2.36 4.55 2.63 5.06C2.90 5.56 3.37 6.00 3.44 6.47C3.51 6.94 3.07 7.38 3.04 7.89C3.01 8.39 3.07 9.06 3.24 9.50C3.41 9.94 3.92 10.33 4.05 10.50L4.96 8.7L5.87 10.5L7.08 11.73"/><circle cx="4.35" cy="3.75" r="0.42" fill="#1FA5E8"/></svg>
<span id="t25" class="t" style="left:201.00px;top:1068.3px;font-size:18.99px;color:#DFE1E5;line-height:26px;letter-spacing:0.095px;">MySQL-@192.168.128.128</span>
<svg class="i" style="left:171.5px;top:1106.0px;" width="21" height="21" viewBox="0 0 16 16"><path fill="none" stroke="#CED0D6" stroke-width="1" stroke-linecap="round" stroke-linejoin="round" d="M4 6L8 10L12 6"/></svg>
<svg class="i" style="left:201.0px;top:1104.0px;" width="24" height="24" viewBox="0 0 16 16"><g fill="none" stroke="#CED0D6" stroke-width="1" stroke-linecap="round" stroke-linejoin="round" stroke-width="0.85"><rect x="0.35" y="6.4" width="3.3" height="3.3" rx="0.8"/><path d="M11.7 3.1H7.6C5.2 3.1 3.7 5.2 3.7 8C3.7 10.8 5.2 12.9 7.6 12.9H11.7Z"/><path stroke-linecap="butt" d="M11.7 5.6H16M11.7 10.5H16"/></g></svg>
<div class="b" style="left:218.5px;top:1122px;width:7px;height:7px;background:#1EC41E;border-radius:50%;"></div>
<span id="t26" class="t" style="left:229.30px;top:1104.2px;font-size:18.99px;color:#DFE1E5;line-height:26px;letter-spacing:-0.188px;">console_2</span>
<span id="t27" class="t" style="left:323.40px;top:1104.2px;font-size:18.99px;color:#6F737A;line-height:26px;letter-spacing:0.100px;">178 ms</span>
<svg class="i" style="left:229.7px;top:1141.0px;" width="24" height="24" viewBox="0 0 16 16"><path fill="none" stroke="#1FA5E8" stroke-width="0.85" stroke-linecap="round" stroke-linejoin="round" d="M0.85 1.45C1.01 1.37 1.44 0.94 1.80 0.95C2.17 0.96 2.50 1.31 3.04 1.52C3.58 1.73 4.39 1.91 5.06 2.23C5.73 2.55 6.47 2.97 7.08 3.44C7.69 3.91 8.26 4.45 8.70 5.06C9.14 5.67 9.41 6.44 9.71 7.08C10.01 7.72 10.14 8.39 10.51 8.90C10.88 9.41 11.42 9.77 11.93 10.11C12.44 10.45 13.12 10.69 13.55 10.92C13.98 11.15 14.34 11.40 14.50 11.50L12.2 12.35L13.75 13.2L15 14.4M0.85 1.45C1.01 1.78 1.52 2.84 1.82 3.44C2.12 4.04 2.36 4.55 2.63 5.06C2.90 5.56 3.37 6.00 3.44 6.47C3.51 6.94 3.07 7.38 3.04 7.89C3.01 8.39 3.07 9.06 3.24 9.50C3.41 9.94 3.92 10.33 4.05 10.50L4.96 8.7L5.87 10.5L7.08 11.73"/><circle cx="4.35" cy="3.75" r="0.42" fill="#1FA5E8"/></svg>
<span id="t28" class="t" style="left:257.40px;top:1140.2px;font-size:18.99px;color:#DFE1E5;line-height:26px;letter-spacing:-0.188px;">console_2</span>
<span id="t29" class="t" style="left:351.50px;top:1140.2px;font-size:18.99px;color:#868A91;line-height:26px;letter-spacing:0.100px;">178 ms</span>
<div class="b" style="left:145.5px;top:1470px;width:311.5px;height:11.5px;background:#4D4F53;"></div>
<div class="b" style="left:459px;top:895px;width:2040px;height:52px;background:#2B2D30;"></div>
<div class="b" style="left:459px;top:947px;width:2040px;height:1px;background:#1E1F22;"></div>
<svg class="i" style="left:477.0px;top:909.0px;" width="24" height="24" viewBox="0 0 16 16"><g fill="none" stroke="#CED0D6" stroke-width="1" stroke-linecap="round" stroke-linejoin="round"><rect x="1.4" y="2.2" width="13.2" height="11.6" rx="1.8" fill="#3E4045"/><path d="M4.2 5.6L6.6 8L4.2 10.4M8.4 10.6H11.6"/></g></svg>
<div class="b" style="left:481.5px;top:922.5px;width:10.5px;height:10.5px;background:#F2C55C;border-radius:50%;"></div>
<svg class="i" style="left:482.5px;top:923.5px;" width="8.5" height="8.5" viewBox="0 0 8.5 8.5"><path fill="none" stroke="#2B2D30" stroke-width="1.3" stroke-linecap="round" stroke-linejoin="round" d="M4.25 1.4V6.6M1.9 4.4L4.25 6.8L6.6 4.4"/></svg>
<span id="t30" class="t" style="left:508.00px;top:910.7px;font-size:18.99px;color:#DFE1E5;line-height:26px;letter-spacing:0.8px;"><span style="font-size:18px">输出</span></span>
<svg class="i" style="left:581.2px;top:909.0px;" width="24" height="24" viewBox="0 0 16 16"><g fill="none" stroke="#CED0D6" stroke-width="1" stroke-linecap="round" stroke-linejoin="round"><rect x="1.6" y="2.4" width="12.8" height="11.2" rx="1.6" fill="#3C3E43"/><path d="M1.6 5.8H14.4M6 2.4V13.6M10 2.4V13.6"/></g></svg>
<span id="t31" class="t" style="left:612.00px;top:909.8px;font-size:18.99px;color:#DFE1E5;line-height:26px;letter-spacing:0.778px;">autocommit</span>
<svg class="i" style="left:725.3px;top:909.0px;" width="24" height="24" viewBox="0 0 16 16"><path fill="none" stroke="#7D8188" stroke-width="1" stroke-linecap="round" d="M4.7 4.7L11.3 11.3M11.3 4.7L4.7 11.3"/></svg>
<div class="b" style="left:562px;top:944.8px;width:198px;height:3.4px;background:#60636A;"></div>
<div class="b" style="left:459px;top:948px;width:2040px;height:49px;background:#2B2D30;"></div>
<div class="b" style="left:459px;top:997px;width:2040px;height:2px;background:#393B40;"></div>
<div class="b" style="left:472.6px;top:957px;width:33px;height:33px;background:#43454A;border-radius:7px;"></div>
<svg class="i" style="left:477.0px;top:961.8px;" width="24" height="24" viewBox="0 0 16 16"><g fill="none" stroke="#CED0D6" stroke-width="1" stroke-linecap="round" stroke-linejoin="round"><rect x="1.6" y="2.4" width="12.8" height="11.2" rx="1.6" fill="#3C3E43"/><path d="M1.6 5.8H14.4M6 2.4V13.6M10 2.4V13.6"/></g></svg>
<svg class="i" style="left:517.0px;top:962.0px;" width="24" height="24" viewBox="0 0 16 16"><g fill="none" stroke="#CED0D6" stroke-width="1" stroke-linecap="round" stroke-linejoin="round"><path d="M0.7 2.3V13.8H14.1"/><path d="M1.9 9.8L4.2 6M5.3 5.8L8.3 8.9M9.5 8.9L13.5 5"/><circle cx="4.7" cy="5.15" r="0.85"/><circle cx="8.9" cy="9.55" r="0.85"/><circle cx="14.05" cy="4.4" r="0.85"/></g></svg>
<div class="b" style="left:552.25px;top:959px;width:1.5px;height:29px;background:#43454A;"></div>
<div class="b" style="left:680.45px;top:959px;width:1.5px;height:29px;background:#43454A;"></div>
<div class="b" style="left:2277.25px;top:959px;width:1.5px;height:29px;background:#43454A;"></div>
<div class="b" style="left:2405.25px;top:959px;width:1.5px;height:29px;background:#43454A;"></div>
<svg class="i" style="left:566.0px;top:962.0px;" width="24" height="24" viewBox="0 0 16 16"><path fill="none" stroke="#CED0D6" stroke-width="1" stroke-linecap="round" stroke-linejoin="round" d="M2.98 9.6C2.98 5.5 5.5 2.8 8.4 2.8C10.3 2.8 12 3.8 12.9 5.1M13.77 6.4C13.77 10.5 11.3 13.3 8.4 13.3C6.5 13.3 4.8 12.3 3.7 10.9M0.9 7.9L2.98 10L5.1 7.8M11.7 8.3L13.77 6.1L15.8 8.3"/></svg>
<svg class="i" style="left:605.0px;top:962.0px;" width="24" height="24" viewBox="0 0 16 16"><g fill="none" stroke="#CED0D6" stroke-width="1" stroke-linecap="round" stroke-linejoin="round"><circle cx="8" cy="8" r="6.5"/><path d="M8 4.5V8.2L10.2 9.6"/></g></svg>
<svg class="i" style="left:604.0px;top:962.0px;" width="24" height="24" viewBox="0 0 16 16"><path fill="#CED0D6" d="M17.6 12.7V16.7H13.6Z"/></svg>
<svg class="i" style="left:643.8px;top:961.9px;" width="24" height="24" viewBox="0 0 16 16"><rect x="1.9" y="1.9" width="12.2" height="12.2" rx="1.8" fill="#5B5C60"/></svg>
<svg class="i" style="left:693.0px;top:962.0px;" width="24" height="24" viewBox="0 0 16 16"><path fill="none" stroke="#CED0D6" stroke-width="1" stroke-linecap="round" stroke-linejoin="round" d="M5 1.8H11M5.8 1.8V6.2L3.6 9.2V10H12.4V9.2L10.2 6.2V1.8M8 10V14.4"/></svg>
<svg class="i" style="left:732.5px;top:962.5px;" width="24" height="24" viewBox="0 0 16 16"><g fill="none" stroke="#CED0D6" stroke-width="1" stroke-linecap="round" stroke-linejoin="round"><circle cx="6.7" cy="7.1" r="4.5"/><path d="M10 10.4L13.6 13.6"/></g></svg>
<div class="b" style="left:766.5px;top:957px;width:33px;height:33px;background:#43454A;border-radius:7px;"></div>
<svg class="i" style="left:771.0px;top:962.0px;" width="24" height="24" viewBox="0 0 16 16"><path fill="none" stroke="#CED0D6" stroke-width="1" stroke-linecap="round" stroke-linejoin="round" d="M14.7 6.4V4.1C14.7 3.2 14 2.5 13.1 2.5H2.9C2 2.5 1.3 3.2 1.3 4.1V12.1C1.3 13 2 13.7 2.9 13.7H8.4M5.45 2.5V13.7"/><path fill="none" stroke="#548AF7" stroke-width="1.1" stroke-linejoin="round" d="M7.2 8.8H15.6L12.2 12.6V17.4H10.6V12.6Z"/></svg>
<span id="t32" class="t" style="left:2212.40px;top:961.5px;font-size:14.88px;color:#DFE1E5;line-height:26px;letter-spacing:-0.750px;">CSV</span>
<svg class="i" style="left:2245.5px;top:965.0px;" width="21" height="21" viewBox="0 0 16 16"><path fill="none" stroke="#CED0D6" stroke-width="1" stroke-linecap="round" stroke-linejoin="round" d="M4 6L8 10L12 6"/></svg>
<svg class="i" style="left:2291.0px;top:962.0px;" width="24" height="24" viewBox="0 0 16 16"><path fill="none" stroke="#CED0D6" stroke-width="1" stroke-linecap="round" stroke-linejoin="round" d="M8 2V10.2M4.8 7.2L8 10.4L11.2 7.2M2.5 10.9V13.7H13.5V10.9"/></svg>
<svg class="i" style="left:2330.0px;top:962.0px;" width="24" height="24" viewBox="0 0 16 16"><path fill="none" stroke="#CED0D6" stroke-width="1" stroke-linecap="round" stroke-linejoin="round" d="M8 10.4V2.2M4.8 5.2L8 2L11.2 5.2M2.5 10.9V13.7H13.5V10.9"/></svg>
<svg class="i" style="left:2369.0px;top:962.0px;" width="24" height="24" viewBox="0 0 16 16"><path fill="none" stroke="#CED0D6" stroke-width="1" stroke-linecap="round" stroke-linejoin="round" d="M14.6 4.2H7.6M10.4 1.4L7.6 4.2L10.4 7M0.6 11H8M5.2 8.2L8 11L5.2 13.8"/><path fill="#CED0D6" d="M16.5 12.7V16.7H12.5Z"/></svg>
<svg class="i" style="left:2418.0px;top:962.0px;" width="24" height="24" viewBox="0 0 16 16"><g fill="none" stroke="#CED0D6" stroke-width="1" stroke-linecap="round" stroke-linejoin="round"><path d="M0.6 8C2.3 4.9 5 3.1 8 3.1C11 3.1 13.7 4.9 15.4 8C13.7 11.1 11 12.9 8 12.9C5 12.9 2.3 11.1 0.6 8Z"/><circle cx="8" cy="8" r="2.4"/></g></svg>
<svg class="i" style="left:2418.0px;top:962.0px;" width="24" height="24" viewBox="0 0 16 16"><path fill="#CED0D6" d="M17.6 12.7V16.7H13.6Z"/></svg>
<svg class="i" style="left:2456.8px;top:961.8px;" width="24" height="24" viewBox="0 0 16 16"><g fill="none" stroke="#CED0D6" stroke-width="1" stroke-linecap="round" stroke-linejoin="round"><path d="M8.00 1.25L8.44 1.30L8.86 1.46L9.25 1.72L9.54 2.25L9.77 2.79L10.03 3.10L10.29 3.35L10.57 3.54L10.88 3.69L11.23 3.80L11.63 3.86L12.21 3.79L12.81 3.78L13.24 3.98L13.58 4.27L13.85 4.62L14.02 5.03L14.10 5.47L14.06 5.94L13.75 6.46L13.39 6.93L13.25 7.31L13.18 7.66L13.15 8.00L13.18 8.34L13.25 8.69L13.39 9.07L13.75 9.54L14.06 10.06L14.10 10.53L14.02 10.97L13.85 11.37L13.58 11.73L13.24 12.02L12.81 12.22L12.21 12.21L11.63 12.14L11.23 12.20L10.88 12.31L10.57 12.46L10.29 12.65L10.03 12.90L9.77 13.21L9.54 13.75L9.25 14.28L8.86 14.54L8.44 14.70L8.00 14.75L7.56 14.70L7.14 14.54L6.75 14.28L6.46 13.75L6.23 13.21L5.97 12.90L5.71 12.65L5.43 12.46L5.12 12.31L4.77 12.20L4.37 12.14L3.79 12.21L3.19 12.22L2.76 12.02L2.42 11.73L2.15 11.38L1.98 10.97L1.90 10.53L1.94 10.06L2.25 9.54L2.61 9.07L2.75 8.69L2.82 8.34L2.85 8.00L2.82 7.66L2.75 7.31L2.61 6.93L2.25 6.46L1.94 5.94L1.90 5.47L1.98 5.03L2.15 4.62L2.42 4.27L2.76 3.98L3.19 3.78L3.79 3.79L4.37 3.86L4.77 3.80L5.12 3.69L5.42 3.54L5.71 3.35L5.97 3.10L6.23 2.79L6.46 2.25L6.75 1.72L7.14 1.46L7.56 1.30Z"/><circle cx="8" cy="8" r="2.1"/></g></svg>
<svg class="i" style="left:2456.8px;top:962.0px;" width="24" height="24" viewBox="0 0 16 16"><path fill="#CED0D6" d="M17.6 12.7V16.7H13.6Z"/></svg>
<div class="b" style="left:459px;top:999px;width:2040px;height:486px;background:#1E1F22;"></div>
<div class="b" style="left:459px;top:999px;width:312px;height:39px;background:#2B2D30;"></div>
<div class="b" style="left:495px;top:999px;width:1px;height:80px;background:#393B40;"></div>
<div class="b" style="left:459px;top:1078.2px;width:313px;height:1.6px;background:#393B40;"></div>
<div class="b" style="left:770.5px;top:1038px;width:1.5px;height:41px;background:#393B40;"></div>
<div class="b" style="left:459px;top:1037.5px;width:312px;height:1px;background:#1E1F22;"></div>
<svg class="i" style="left:503.0px;top:1007.2px;" width="24" height="24" viewBox="0 0 16 16"><g fill="none" stroke="#CED0D6" stroke-width="1" stroke-linecap="round" stroke-linejoin="round"><path d="M3 2.4H5.2V13.6H3C2 13.6 1.2 12.8 1.2 11.8V4.2C1.2 3.2 2 2.4 3 2.4Z" fill="#4B4D52" stroke="none"/><rect x="1.2" y="2.4" width="13.6" height="11.2" rx="1.8"/><path d="M5.2 2.4V13.6"/></g></svg>
<span id="t33" class="t m" style="left:533.20px;top:1006.8px;font-size:20.00px;color:#CED0D6;line-height:26px;">@@autocommit</span>
<svg class="i" style="left:687.0px;top:1007.5px;" width="24" height="24" viewBox="0 0 16 16"><path fill="none" stroke="#CED0D6" stroke-width="1" stroke-linecap="round" stroke-linejoin="round" d="M2.4 2.4H13.6L9.4 7.8V13.8L6.6 12.2V7.8Z"/></svg>
<svg class="i" style="left:741.1px;top:1012.9px;" width="9" height="12.4" viewBox="0 0 10 13"><path fill="#868A91" d="M5 0.4L9.3 5.3H0.7ZM5 12.6L9.3 7.7H0.7Z"/></svg>
<span id="t34" class="t m" style="left:471.50px;top:1048.8px;font-size:20.00px;color:#5A5D63;line-height:26px;">1</span>
<span id="t35" class="t m" style="left:753.40px;top:1048.8px;font-size:20.00px;color:#DFE1E5;line-height:26px;">1</span>
<div class="b" style="left:1410px;top:1411px;width:137px;height:54px;background:#2B2D30;border-radius:13px;border:1.5px solid #3E4045;box-sizing:border-box;"></div>
<span id="t36" class="t" style="left:1430.00px;top:1428.5px;font-size:16.24px;color:#DFE1E5;line-height:26px;letter-spacing:1.000px;">1 <span style="font-size:14.5px">行</span></span>
<svg class="i" style="left:1465.5px;top:1432.5px;" width="21" height="21" viewBox="0 0 16 16"><path fill="none" stroke="#CED0D6" stroke-width="1" stroke-linecap="round" stroke-linejoin="round" d="M4 6L8 10L12 6"/></svg>
<div class="b" style="left:1494.5px;top:1423px;width:1.5px;height:30px;background:#43454A;"></div>
<div class="b" style="left:1518.4px;top:1429.9px;width:3.2px;height:3.2px;background:#CED0D6;border-radius:50%;"></div>
<div class="b" style="left:1518.4px;top:1437.4px;width:3.2px;height:3.2px;background:#CED0D6;border-radius:50%;"></div>
<div class="b" style="left:1518.4px;top:1444.9px;width:3.2px;height:3.2px;background:#CED0D6;border-radius:50%;"></div>
<div class="b" style="left:0px;top:1485px;width:2560px;height:43px;background:#2B2D30;"></div>
<div class="b" style="left:0px;top:1483px;width:2560px;height:2px;background:#1E1F22;"></div>
<span id="t37" class="t" style="left:20.00px;top:1493.0px;font-size:18.99px;color:#9DA1A9;line-height:26px;letter-spacing:0.280px;"><span style="font-size:18px">数据库控制台</span></span>
<svg class="i" style="left:136.5px;top:1496.0px;opacity:.75;" width="20" height="20" viewBox="0 0 16 16"><path fill="none" stroke="#CED0D6" stroke-width="1" stroke-linecap="round" stroke-linejoin="round" d="M6 4L10 8L6 12"/></svg>
<span id="t38" class="t" style="left:164.40px;top:1493.0px;font-size:18.99px;color:#9DA1A9;line-height:26px;letter-spacing:0.119px;">MySQL-@192.168.128.128</span>
<svg class="i" style="left:406.4px;top:1496.0px;opacity:.75;" width="20" height="20" viewBox="0 0 16 16"><path fill="none" stroke="#CED0D6" stroke-width="1" stroke-linecap="round" stroke-linejoin="round" d="M6 4L10 8L6 12"/></svg>
<svg class="i" style="left:436.0px;top:1494.0px;" width="22" height="22" viewBox="0 0 16 16"><path fill="none" stroke="#1FA5E8" stroke-width="0.85" stroke-linecap="round" stroke-linejoin="round" d="M0.85 1.45C1.01 1.37 1.44 0.94 1.80 0.95C2.17 0.96 2.50 1.31 3.04 1.52C3.58 1.73 4.39 1.91 5.06 2.23C5.73 2.55 6.47 2.97 7.08 3.44C7.69 3.91 8.26 4.45 8.70 5.06C9.14 5.67 9.41 6.44 9.71 7.08C10.01 7.72 10.14 8.39 10.51 8.90C10.88 9.41 11.42 9.77 11.93 10.11C12.44 10.45 13.12 10.69 13.55 10.92C13.98 11.15 14.34 11.40 14.50 11.50L12.2 12.35L13.75 13.2L15 14.4M0.85 1.45C1.01 1.78 1.52 2.84 1.82 3.44C2.12 4.04 2.36 4.55 2.63 5.06C2.90 5.56 3.37 6.00 3.44 6.47C3.51 6.94 3.07 7.38 3.04 7.89C3.01 8.39 3.07 9.06 3.24 9.50C3.41 9.94 3.92 10.33 4.05 10.50L4.96 8.7L5.87 10.5L7.08 11.73"/><circle cx="4.35" cy="3.75" r="0.42" fill="#1FA5E8"/></svg>
<span id="t39" class="t" style="left:464.40px;top:1493.0px;font-size:18.99px;color:#9DA1A9;line-height:26px;letter-spacing:0.061px;">console_2 [MySQL-@192.168.128.128]</span>
<span id="t40" class="t" style="left:2113.40px;top:1493.0px;font-size:18.99px;color:#9DA1A9;line-height:26px;letter-spacing:0.125px;">163:1 (20 <span style="font-size:18px">字符</span>)</span>
<span id="t41" class="t" style="left:2264.60px;top:1493.0px;font-size:17.10px;color:#9DA1A9;line-height:26px;letter-spacing:-0.633px;">CRLF</span>
<span id="t42" class="t" style="left:2332.00px;top:1493.0px;font-size:18.99px;color:#9DA1A9;line-height:26px;letter-spacing:0.125px;">UTF-8</span>
<span id="t43" class="t" style="left:2414.40px;top:1493.0px;font-size:18.99px;color:#9DA1A9;line-height:26px;letter-spacing:0.375px;">4 <span style="font-size:18px">个空格</span></span>
<svg class="i" style="left:2514.0px;top:1495.0px;" width="22" height="22" viewBox="0 0 16 16"><g fill="none" stroke="#CED0D6" stroke-width="1" stroke-linecap="round" stroke-linejoin="round"><rect x="1.6" y="6.6" width="10" height="7.8" rx="1.6"/><path d="M6.6 9.6V11.4M8.6 6.6V4.4C8.6 2.9 9.8 1.8 11.2 1.8C12.6 1.8 13.8 2.9 13.8 4.4V5.4"/></g></svg>
</body></html>
